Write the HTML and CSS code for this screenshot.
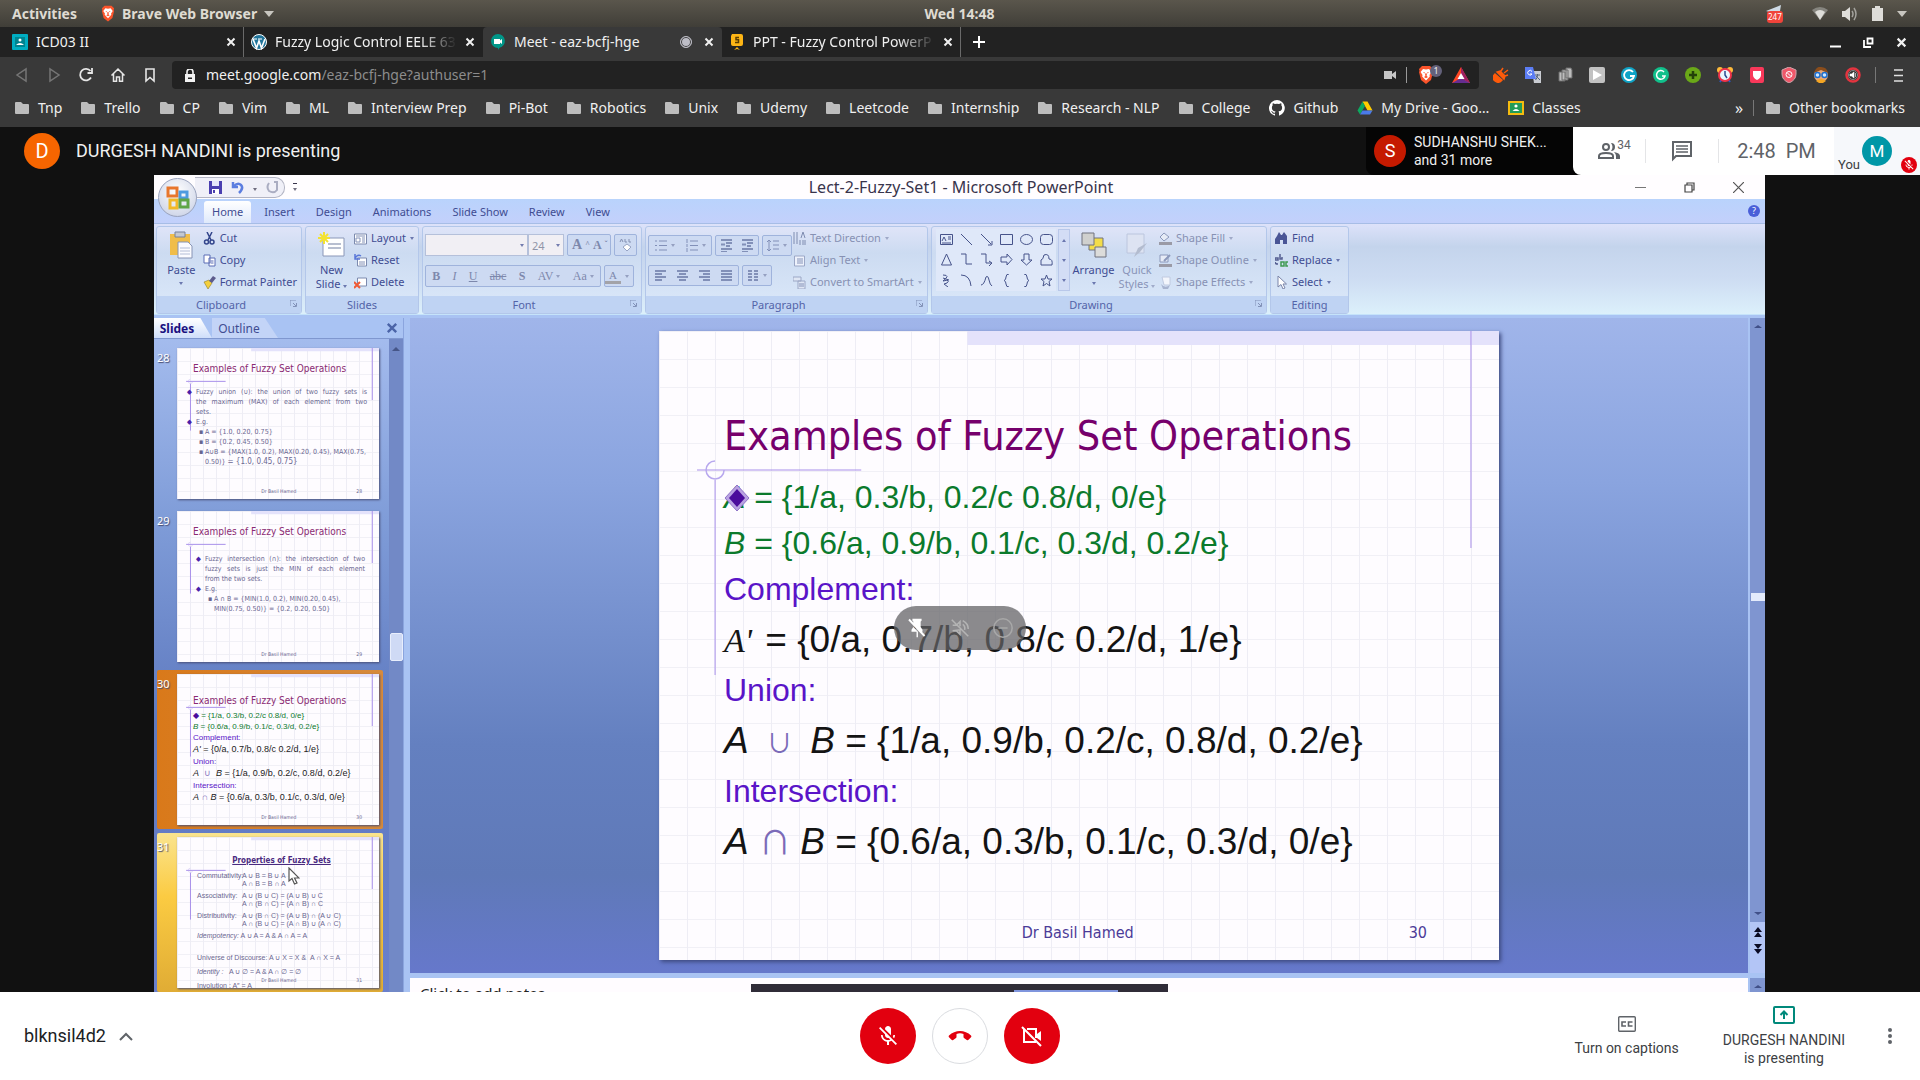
FILE: index.html
```html
<!DOCTYPE html>
<html lang="en">
<head>
<meta charset="utf-8">
<title>Meet - eaz-bcfj-hge</title>
<link rel="stylesheet" href="styles.css">
</head>
<body>
<svg class="sprite" aria-hidden="true">
  <symbol id="folder" viewBox="0 0 14 12"><path d="M1 0h5l2 2h5q1 0 1 1v8q0 1-1 1H1q-1 0-1-1V1q0-1 1-1z"/></symbol>
  <symbol id="close" viewBox="0 0 10 10"><path d="M1.5 1.5l7 7M8.500 1.500l-7 7" stroke="currentColor" stroke-width="2" fill="none"/></symbol>
  <symbol id="lion" viewBox="0 0 16 18"><path fill="#fb542b" d="M4 0h8l3 3-.5 2 .5 1-2 8-5 4-5-4L1 6l.5-1L1 3z"/><path fill="#fff" d="M5 3l3 .6L11 3l2.400 3-1.900 3 .3 1.500L8 14.500l-3.800-4 .3-1.500-1.900-3z"/><path fill="#fb542b" d="M5 6l2 .6-.7 1zM11 6l-2 .6.7 1zM7 7.500h2L8.600 10 10 11l-2 1.200L6 11l1.400-1z"/></symbol>
  <symbol id="mic-off" viewBox="0 0 24 24"><path d="M19 11h-1.700c0 .74-.16 1.430-.43 2.050l1.230 1.230c.56-.98.9-2.090.9-3.280zm-4.020.17c0-.06.02-.11.02-.17V5c0-1.660-1.340-3-3-3S9 3.340 9 5v.18l5.980 5.990zM4.270 3L3 4.270l6.010 6.010V11c0 1.660 1.330 3 2.990 3 .22 0 .44-.03.65-.08l1.660 1.660c-.71.33-1.500.52-2.310.52-2.760 0-5.300-2.100-5.300-5.100H5c0 3.410 2.720 6.230 6 6.720V21h2v-3.280c.91-.13 1.770-.45 2.540-.9L19.730 21 21 19.730 4.270 3z"/></symbol>
  <symbol id="launcher" viewBox="0 0 7 7"><path d="M0 6V0h6M3 3l3 3M6.500 3v3.500H3" fill="none" stroke="#8292b8"/></symbol>
  <symbol id="deco" viewBox="0 0 839 629" preserveAspectRatio="none"><path d="M308 0h531v14H308z" fill="#e4e2fb"/><path d="M811 0v217M38 139h164M56 149v195" stroke="#a990ea" stroke-width="1" vector-effect="non-scaling-stroke" fill="none"/><path d="M56 130a9 9 0 1 0 0 18a9 9 0 0 0 9-9" fill="none" stroke="#b8a8ee" stroke-width="1.500"/></symbol>
</svg>

<header class="desktop-bar">
  <button class="activities">Activities</button>
  <button class="app-menu"><svg width="14" height="17"><use href="#lion"/></svg>Brave Web Browser<span class="caret"></span></button>
  <time class="clock">Wed 14:48</time>
  <div class="tray">
    <span class="telegram"><svg width="16" height="12" viewBox="0 0 16 12"><path d="M0 6L15 0l-2 12-6-4z" fill="#cfdbe6"/></svg><b>247</b></span>
    <svg width="16" height="14" viewBox="0 0 16 14"><path d="M0 3Q8-3 16 3L8 13z" fill="#86857f"/><path d="M3 5Q8 1 13 5L8 13z" fill="#deddd9"/></svg>
    <svg width="16" height="14" viewBox="0 0 16 14"><path d="M0 4h3l5-4v14L3 10H0z" fill="#deddd9"/><path d="M10 4q2 3 0 6M12 1q4 6 0 12" stroke="#a3a29d" stroke-width="1.500" fill="none"/></svg>
    <svg width="11" height="15" viewBox="0 0 11 15"><path d="M3 0h5v2h3v13H0V2h3z" fill="#deddd9"/></svg>
    <span class="caret"></span>
  </div>
</header>

<nav class="tabs">
  <div class="tab"><svg width="16" height="16" viewBox="0 0 16 16"><rect width="16" height="16" rx="1" fill="#00acc1"/><path d="M3 3h10v10H3z" fill="#00838f"/><circle cx="8" cy="6" r="1.500" fill="#fff"/><path d="M4 11q4-4 8 0z" fill="#fff"/></svg><a href="#">ICD03 II</a><button aria-label="Close"><svg width="10" height="10"><use href="#close"/></svg></button></div>
  <div class="tab"><svg width="16" height="16" viewBox="0 0 16 16"><circle cx="8" cy="8" r="7.500" fill="#21759b" stroke="#fff"/><path d="M2 5l3.500 9L8 7l2.500 7L14 5" fill="none" stroke="#fff" stroke-width="1.600"/><path d="M2 5h4M7 5h4" stroke="#fff"/></svg><a href="#" class="fade">Fuzzy Logic Control EELE 63</a><button aria-label="Close"><svg width="10" height="10"><use href="#close"/></svg></button></div>
  <div class="tab active"><svg width="16" height="16" viewBox="0 0 16 16"><path d="M8 0a7 7 0 0 1 1.500 13.800L8 16v-2A7 7 0 0 1 8 0z" fill="#009688"/><path d="M4 5h6v1.500L12 5v5l-2-1.500V10H4z" fill="#fff"/></svg><a href="#">Meet - eaz-bcfj-hge</a><i class="rec"></i><button aria-label="Close"><svg width="10" height="10"><use href="#close"/></svg></button></div>
  <div class="tab"><svg width="16" height="16" viewBox="0 0 16 16"><path d="M3 0h9q2 0 2 2v8q0 2-2 2H4q-2 0-2-2V2zM8 13l3 3-3-1-3 1z" fill="#fdb515"/><path d="M10 3.500H7v2.300h2.500v2.700H6" fill="none" stroke="#5a3c00" stroke-width="1.500"/></svg><a href="#" class="fade">PPT - Fuzzy Control PowerP</a><button aria-label="Close"><svg width="10" height="10"><use href="#close"/></svg></button></div>
  <button class="new-tab" aria-label="New tab"><svg width="12" height="12" viewBox="0 0 12 12"><path d="M6 0v12M0 6h12" stroke="#fff" stroke-width="2"/></svg></button>
  <div class="window-buttons">
    <button aria-label="Minimize"><svg width="11" height="11" viewBox="0 0 11 11"><path d="M0 9.500h11" stroke="#fff" stroke-width="2"/></svg></button>
    <button aria-label="Restore"><svg width="11" height="11" viewBox="0 0 11 11"><path d="M4.500 1.500h5v5h-5zM1 3v7h7" stroke="#fff" stroke-width="1.800" fill="none"/></svg></button>
    <button aria-label="Close window"><svg width="11" height="11"><use href="#close"/></svg></button>
  </div>
</nav>

<div class="toolbar">
  <div class="nav-buttons">
    <button aria-label="Back"><svg width="16" height="16" viewBox="0 0 16 16"><path d="M12 2v12L3 8z" stroke="#757575" stroke-width="1.500" fill="none"/></svg></button>
    <button aria-label="Forward"><svg width="16" height="16" viewBox="0 0 16 16"><path d="M4 2v12l9-6z" stroke="#757575" stroke-width="1.500" fill="none"/></svg></button>
    <button aria-label="Reload"><svg width="16" height="16" viewBox="0 0 16 16"><path d="M13 10.500A5.800 5.800 0 1 1 12.500 4M14 1v5H9.500" stroke="#e6e6e6" stroke-width="1.800" fill="none"/></svg></button>
    <button aria-label="Home"><svg width="16" height="16" viewBox="0 0 16 16"><path d="M1.500 8.500L8 2l6.500 6.500M3.500 7v7.300h3V10h3v4.300h3V7" stroke="#e6e6e6" stroke-width="1.500" fill="none"/></svg></button>
    <button aria-label="Bookmark"><svg width="16" height="16" viewBox="0 0 16 16"><path d="M4 2h8v12l-4-3.500L4 14z" stroke="#e6e6e6" stroke-width="1.600" fill="none"/></svg></button>
  </div>
  <div class="address">
    <svg width="10" height="13" viewBox="0 0 10 13"><path d="M0 5h10v8H0z" fill="#f2f2f2"/><path d="M2 5V3a3 3 0 0 1 6 0v2" stroke="#f2f2f2" stroke-width="1.600" fill="none"/><path d="M3 8.500h4v1.500H3z" fill="#222"/></svg>
    <a href="#">meet.google.com<span>/eaz-bcfj-hge?authuser=1</span></a>
    <svg width="12" height="10" viewBox="0 0 12 10"><path d="M0 1h8v3l4-3v8L8 6v3H0z" fill="#c5c5c5"/></svg>
    <i class="rule"></i>
    <span class="shield"><svg width="16" height="18"><use href="#lion"/></svg><b>1</b></span>
    <svg width="18" height="16" viewBox="0 0 18 16"><path d="M9 0l9 16H0z" fill="#ff4724"/><path d="M9 0l9 16-9-5z" fill="#9e1f63"/><path d="M0 16l9-5 9 5z" fill="#662d91"/><path d="M9 6l3.500 6h-7z" fill="#fff"/></svg>
  </div>
  <div class="extensions">
    <svg viewBox="0 0 16 16"><path d="M2 7l7 6q-3 4-7 1T2 7zM4 5l7 7 1-3-5-5zM8 4l2-3M11 6l4-3M12 9l3-1" fill="#ff5b0a" stroke="#ff5b0a" stroke-width="1.500"/></svg>
    <svg viewBox="0 0 16 16"><path d="M7 4h9v12H9z" fill="#c9ccd2"/><path d="M0 0h8l3 12H0z" fill="#5b7df5"/><path d="M7 4.500A2.300 2.300 0 1 0 7 7H5" stroke="#fff" fill="none"/><path d="M10 8h5M12.500 7v1q0 3-2 5M11 9l4 4" stroke="#56657f" fill="none"/></svg>
    <svg viewBox="0 0 16 16"><path d="M2 5h6v9H2zM5 3h6v10H5zM9 1h5l1 2v8H9z" fill="#bdbdbd" stroke="#6b6b6b"/></svg>
    <svg viewBox="0 0 16 16"><rect width="16" height="16" rx="2" fill="#c2c2c2"/><path d="M4 3l9 5-9 5z" fill="#fff"/></svg>
    <svg viewBox="0 0 16 16"><circle cx="8" cy="8" r="8" fill="#0fa3c6"/><path d="M12 5A5 5 0 1 0 13 9H9" stroke="#fff" stroke-width="1.800" fill="none"/></svg>
    <svg viewBox="0 0 16 16"><circle cx="8" cy="8" r="8" fill="#11c08b"/><path d="M11 5A4.300 4.300 0 1 0 12 9H9" stroke="#fff" stroke-width="1.500" fill="none"/></svg>
    <svg viewBox="0 0 16 16"><circle cx="8" cy="8" r="8" fill="#6aa818"/><path d="M8 4v8M4 8h8" stroke="#24420a" stroke-width="2.500"/></svg>
    <svg viewBox="0 0 16 16"><circle cx="3" cy="3" r="3" fill="#ffba3a"/><circle cx="13" cy="3" r="3" fill="#ffba3a"/><path d="M3 15l2-3M13 15l-2-3" stroke="#2b56c5" stroke-width="2"/><circle cx="8" cy="8" r="6" fill="#eaf6ff" stroke="#f0334a" stroke-width="2"/><path d="M8 4v4l2 3" stroke="#2b4a90" stroke-width="1.500" fill="none"/></svg>
    <svg viewBox="0 0 16 16"><rect x="1" width="14" height="16" rx="2" fill="#f9385a"/><path d="M4 4h8v4q0 3-4 5-4-2-4-5z" fill="#fff"/></svg>
    <svg viewBox="0 0 16 16"><path d="M8 0l7 3v4q0 6-7 9-7-3-7-9V3z" fill="#f0586a" stroke="#cfa5ab"/><circle cx="8" cy="7.500" r="3" fill="none" stroke="#fff"/><path d="M6 5.500l4 4" stroke="#fff"/></svg>
    <svg viewBox="0 0 16 16"><circle cx="8" cy="8" r="7" fill="#e9a878"/><path d="M1 6q2-7 7-6 6 0 7 6L8 3z" fill="#8a4d1c"/><path d="M3 14q5-4 10 0l-3 2H6z" fill="#f5a623"/><circle cx="4.500" cy="8" r="2.500" fill="#cfe7ff" stroke="#1d6fd0" stroke-width="1.500"/><circle cx="11.500" cy="8" r="2.500" fill="#cfe7ff" stroke="#1d6fd0" stroke-width="1.500"/></svg>
    <svg viewBox="0 0 16 16"><circle cx="8" cy="8" r="6.500" fill="#333" stroke="#e3343f" stroke-width="2.500"/><circle cx="8" cy="8" r="4.500" fill="none" stroke="#888"/><path d="M5 7h1.500L9 5v6L6.500 9H5zM10.500 6v4" fill="#fff" stroke="#fff" stroke-width=".6"/></svg>
  </div>
  <i class="rule"></i>
  <button class="menu" aria-label="Menu"><svg width="9" height="13" viewBox="0 0 9 13"><path d="M0 1h9M0 6.500h9M0 12h9" stroke="#e0e0e0" stroke-width="1.600"/></svg></button>
</div>

<nav class="bookmarks">
  <a href="#"><svg><use href="#folder"/></svg>Tnp</a>
  <a href="#"><svg><use href="#folder"/></svg>Trello</a>
  <a href="#"><svg><use href="#folder"/></svg>CP</a>
  <a href="#"><svg><use href="#folder"/></svg>Vim</a>
  <a href="#"><svg><use href="#folder"/></svg>ML</a>
  <a href="#"><svg><use href="#folder"/></svg>Interview Prep</a>
  <a href="#"><svg><use href="#folder"/></svg>Pi-Bot</a>
  <a href="#"><svg><use href="#folder"/></svg>Robotics</a>
  <a href="#"><svg><use href="#folder"/></svg>Unix</a>
  <a href="#"><svg><use href="#folder"/></svg>Udemy</a>
  <a href="#"><svg><use href="#folder"/></svg>Leetcode</a>
  <a href="#"><svg><use href="#folder"/></svg>Internship</a>
  <a href="#"><svg><use href="#folder"/></svg>Research - NLP</a>
  <a href="#"><svg><use href="#folder"/></svg>College</a>
  <a href="#" class="site"><svg viewBox="0 0 16 16"><path fill="#fff" d="M8 0a8 8 0 0 0-2.530 15.590c.4.070.55-.17.55-.38v-1.490C3.730 14.200 3.300 12.700 3.300 12.700c-.36-.92-.89-1.170-.89-1.170-.73-.5.050-.49.050-.49.810.06 1.230.83 1.230.83.72 1.230 1.880.87 2.340.67.070-.52.280-.88.510-1.080-1.780-.2-3.640-.89-3.640-3.950 0-.87.310-1.590.82-2.150-.08-.2-.36-1.020.08-2.120 0 0 .67-.22 2.200.82a7.600 7.600 0 0 1 4 0c1.530-1.040 2.200-.82 2.200-.82.440 1.100.16 1.920.08 2.120.51.560.82 1.270.82 2.150 0 3.070-1.870 3.750-3.650 3.950.29.25.54.73.54 1.480v2.190c0 .21.150.46.550.38A8 8 0 0 0 8 0z"/></svg>Github</a>
  <a href="#" class="site"><svg viewBox="0 0 16 16"><path d="M5.500 1.500h5l5 9h-5z" fill="#fc0"/><path d="M5.500 1.500L8 6 3 14.500.5 10.500z" fill="#0da960"/><path d="M5.500 10.500h10L13 14.500H3z" fill="#4a7bea"/></svg>My Drive - Goo…</a>
  <a href="#" class="site"><svg viewBox="0 0 16 16"><path d="M0 1h16v14H0z" fill="#f5bc10"/><path d="M2 3h12v10H2z" fill="#229c58"/><circle cx="8" cy="6" r="1.600" fill="#fff"/><path d="M4.500 11q3.500-4 7 0z" fill="#fff"/></svg>Classes</a>
  <button class="more">»</button>
  <i class="rule"></i>
  <a href="#" class="other"><svg><use href="#folder"/></svg>Other bookmarks</a>
</nav>

<main class="meet">
  <header class="meet-head">
    <span class="avatar orange">D</span>
    <h1>DURGESH NANDINI is presenting</h1>
    <div class="speaker"><span class="avatar red">S</span><p>SUDHANSHU SHEK...<br>and 31 more</p></div>
    <div class="meet-panel">
      <button class="people" aria-label="People"><svg width="24" height="24" viewBox="0 0 24 24"><path fill="none" stroke="#5f6368" stroke-width="2" d="M2 19v-2q0-3 7-3t7 3v2z"/><circle cx="9" cy="8" r="3" fill="none" stroke="#5f6368" stroke-width="2"/><path fill="#5f6368" d="M14 4a4 4 0 1 1 0 8q3-4 0-8zM17 13q6 1 6 4v3h-4v-3q0-2-2-4z"/></svg><sup>34</sup></button>
      <button class="chat" aria-label="Chat"><svg width="24" height="24" viewBox="0 0 24 24"><path d="M3 3h18v14H6l-3 3z" fill="none" stroke="#5f6368" stroke-width="2"/><path d="M6 7h12M6 10h12M6 13h12" stroke="#5f6368" stroke-width="1.700"/></svg></button>
      <time>2:48 &nbsp;PM</time>
      <div class="self"><span>You</span><span class="avatar teal">M</span><i class="muted"><svg width="12" height="12" fill="#fff"><use href="#mic-off"/></svg></i></div>
    </div>
  </header>

  <section class="stage">
    <div class="ppt">
      <div class="ppt-title">
        <div class="quick">
          <button aria-label="Save"><svg width="13" height="13" viewBox="0 0 13 13"><path d="M0 0h13v13H0z" fill="#4b3fb0"/><path d="M3 0h7v5H3z" fill="#e6e6fa"/><path d="M3 8h7v5H3z" fill="#fff"/><path d="M4 9h2v3H4z" fill="#4b3fb0"/></svg></button>
          <button aria-label="Undo"><svg width="13" height="13" viewBox="0 0 13 13"><path d="M2 1v5h5" stroke="#5c7ee0" stroke-width="2.500" fill="none"/><path d="M3 5q4-4 7-1t-2 8" stroke="#5c7ee0" stroke-width="2.500" fill="none"/></svg></button>
          <button aria-label="Undo list"><i class="drop"></i></button>
          <button aria-label="Redo"><svg width="13" height="13" viewBox="0 0 13 13"><path d="M8 1h3v4M3 2Q0 6 3 10q5 3 8-1V4" stroke="#aaadc2" stroke-width="2" fill="none"/></svg></button>
        </div>
        <button class="quick-more" aria-label="Customize"><i class="drop"></i></button>
        <h2>Lect-2-Fuzzy-Set1 - Microsoft PowerPoint</h2>
        <div class="ppt-window">
          <button aria-label="Minimize"><svg width="11" height="11" viewBox="0 0 11 11"><path d="M0 5.500h11" stroke="#777"/></svg></button>
          <button aria-label="Restore"><svg width="11" height="11" viewBox="0 0 11 11"><path d="M1 3h7v7H1zM3 3V1h7v7H8" stroke="#444" stroke-width="1.200" fill="none"/></svg></button>
          <button aria-label="Close"><svg width="11" height="11" viewBox="0 0 11 11"><path d="M0 0l11 11M11 0L0 11" stroke="#555" stroke-width="1.200"/></svg></button>
        </div>
      </div>
      <button class="orb" aria-label="Office"><svg width="24" height="24" viewBox="0 0 24 24" fill="none" stroke-width="3"><path d="M2 2h9v8H2z" stroke="#e8762c"/><path d="M14 6h7v6h-7z" stroke="#4d9be0"/><path d="M4 14h7v8H4z" stroke="#f2b928"/><path d="M14 14h8v7h-8z" stroke="#5fa548"/></svg></button>
      <div class="ribbon-tabs">
        <button class="on">Home</button><button>Insert</button><button>Design</button><button>Animations</button><button>Slide Show</button><button>Review</button><button>View</button>
        <button class="help" aria-label="Help">?</button>
      </div>
      <div class="ribbon">
        <fieldset class="group g-clip">
          <div class="group-body">
            <button class="tall"><svg width="26" height="28" viewBox="0 0 26 28"><path d="M2 3h20v21H2z" fill="#f0bd4a"/><path d="M7 1h10v5H7z" fill="#c3c8d2" stroke="#76809a"/><path d="M10 11h10l4 4v12H10z" fill="#fbfbff" stroke="#8794b5"/><path d="M12 17h10M12 20h10M12 23h10" stroke="#b3bdd6"/></svg>Paste<i class="drop"></i></button>
            <div class="stack">
              <button><svg viewBox="0 0 13 13"><path d="M4 0l4 8M9 0L5 8" stroke="#33458c" stroke-width="1.500"/><circle cx="3.500" cy="10" r="2" fill="none" stroke="#33458c" stroke-width="1.500"/><circle cx="9" cy="10" r="2" fill="none" stroke="#33458c" stroke-width="1.500"/></svg>Cut</button>
              <button><svg viewBox="0 0 13 13"><path d="M1 1h6v8H1zM6 4h6v8H6z" fill="#fff" stroke="#5a6db5"/><path d="M7.500 7h3M7.500 9h3" stroke="#5a6db5"/></svg>Copy</button>
              <button><svg viewBox="0 0 13 13"><path d="M1 6l5-2 3 3-4 6z" fill="#f4cf3c" stroke="#8d7a2a" stroke-width=".6"/><path d="M6 5l4-5 3 2-4 5z" fill="#5c5b8c"/></svg>Format Painter</button>
            </div>
          </div>
          <legend class="with-launch">Clipboard</legend><svg class="launch"><use href="#launcher"/></svg>
        </fieldset>
        <fieldset class="group g-slides">
          <div class="group-body">
            <button class="tall"><svg width="28" height="28" viewBox="0 0 28 28"><path d="M5 7h21v18H5z" fill="#fff" stroke="#8a97b8"/><path d="M10 13h13M10 17h13" stroke="#b8bfd0" stroke-width="2"/><path d="M6 1v12M0 7h12M2 3l8 8M10 3l-8 8" stroke="#f3e230" stroke-width="2"/></svg>New<span>Slide <i class="drop"></i></span></button>
            <div class="stack">
              <button><svg viewBox="0 0 13 13"><path d="M.5 2h12v10H.5z" fill="#fff" stroke="#7c8aae"/><path d="M2 4h9M2 6h4v4H2zM8 6h3M8 8h3M8 10h3" stroke="#8492b8" fill="none"/></svg>Layout<i class="drop"></i></button>
              <button><svg viewBox="0 0 13 13"><path d="M3.500 4h9v8h-9z" fill="#fff" stroke="#7c8aae"/><path d="M5 8h6M5 10h6" stroke="#8492b8"/><path d="M1 0v5h5M1 4q3-4 6-2" stroke="#5876d8" stroke-width="1.500" fill="none"/></svg>Reset</button>
              <button><svg viewBox="0 0 13 13"><path d="M3.500 2h9v8h-9z" fill="#fff" stroke="#7c8aae"/><path d="M0 6l6 6M6 6l-6 6" stroke="#ef5a36" stroke-width="2"/></svg>Delete</button>
            </div>
          </div>
          <legend>Slides</legend>
        </fieldset>
        <fieldset class="group g-font">
          <div class="group-body rows">
            <div class="row">
              <span class="combo"><input class="font-name" aria-label="Font" value=""><input class="font-size" aria-label="Font size" value="24"><i class="drop d1"></i><i class="drop d2"></i></span>
              <span class="cluster"><button class="serif big">A<sup>^</sup></button><button class="serif">A<sup>ˇ</sup></button></span>
              <span class="cluster"><button aria-label="Clear formatting"><svg width="13" height="14" viewBox="0 0 13 14"><path d="M1 4l1.500-3L4 4M6 1v3h2M10 1v3h2" stroke="#8490b2" fill="none"/><path d="M4 9l4-3 4 3-4 4z" fill="#fff" stroke="#98a4c4"/></svg></button></span>
            </div>
            <div class="row">
              <span class="cluster letters"><button><b>B</b></button><button><i>I</i></button><button><u>U</u></button><button><s>abc</s></button><button><b>S</b></button><button>AV<em class="drop"></em></button><button>Aa<em class="drop"></em></button></span>
              <span class="cluster"><button class="ink">A</button><button aria-label="Font colors"><i class="drop"></i></button></span>
            </div>
          </div>
          <legend class="with-launch">Font</legend><svg class="launch"><use href="#launcher"/></svg>
        </fieldset>
        <fieldset class="group g-para">
          <div class="group-body">
            <div class="rows">
              <div class="row">
                <span class="cluster lists"><button aria-label="Bullets"><svg class="g"><path d="M0 2h2M0 6.500h2M0 11h2M4 2h8M4 6.500h8M4 11h8"/></svg><i class="drop"></i></button><button aria-label="Numbering"><svg class="g"><path d="M1 0v4M1 5v3M1 9v4M4 2h8M4 6.500h8M4 11h8"/></svg><i class="drop"></i></button></span>
                <span class="cluster"><button aria-label="Outdent"><svg class="g"><path d="M1 1h11M6 4h6M6 7h4M1 10h11M5 5.500H1M1 13h6" stroke-width="2"/></svg></button><button aria-label="Indent"><svg class="g"><path d="M1 1h11M6 4h6M6 7h4M1 10h11M1 5.500h4M1 13h6" stroke-width="2"/></svg></button></span>
                <span class="cluster"><button aria-label="Line spacing"><svg class="g"><path d="M2 1v11M0 3l2-2 2 2M0 10l2 2 2-2M6 2h6M6 6h6M6 10h6"/></svg><i class="drop"></i></button></span>
              </div>
              <div class="row">
                <span class="cluster aligns"><button aria-label="Left"><svg class="g"><path d="M1 2h11M1 5h7M1 8h11M1 11h7" stroke-width="2"/></svg></button><button aria-label="Center"><svg class="g"><path d="M1 2h11M3 5h7M1 8h11M3 11h7" stroke-width="2"/></svg></button><button aria-label="Right"><svg class="g"><path d="M1 2h11M5 5h7M1 8h11M5 11h7" stroke-width="2"/></svg></button><button aria-label="Justify"><svg class="g"><path d="M1 2h11M1 5h11M1 8h11M1 11h11" stroke-width="2"/></svg></button></span>
                <span class="cluster"><button aria-label="Columns"><svg class="g"><path d="M1 2h4M7 2h4M1 5h4M7 5h4M1 8h4M7 8h4M1 11h4M7 11h4" stroke-width="2"/></svg><i class="drop"></i></button></span>
              </div>
            </div>
            <div class="stack faint">
              <button><svg viewBox="0 0 13 13"><path d="M1 0v12M4 0v12M8 6l2-6 2 6M7 8v5M10 8v5M12 8v5" stroke="#7f8cb0" fill="none"/></svg>Text Direction<i class="drop"></i></button>
              <button><svg viewBox="0 0 13 13"><path d="M1.500 2h10v10h-10z" fill="#eef2fc" stroke="#9ba7c6"/><path d="M4 5h6M4 7h6M4 9h6" stroke="#8492b8"/></svg>Align Text<i class="drop"></i></button>
              <button><svg viewBox="0 0 13 13"><path d="M0 1h8v4H0zM5 5h7v8H5z" fill="#dfe6f4" stroke="#9ba7c6"/><path d="M6 8h5M6 10h5" stroke="#8492b8"/></svg>Convert to SmartArt<i class="drop"></i></button>
            </div>
          </div>
          <legend class="with-launch">Paragraph</legend><svg class="launch"><use href="#launcher"/></svg>
        </fieldset>
        <fieldset class="group g-draw">
          <div class="group-body">
            <div class="gallery">
              <svg class="g"><path d="M.5 1.500h12v10H.5zM2 8l2-4 2 4M8 4h3M8 6h3M2 10h9"/></svg><svg class="g"><path d="M1 1l11 11"/></svg><svg class="g"><path d="M1 1l10 10M8 12h4V8"/></svg><svg class="g"><path d="M.5 1.500h12v10H.5z"/></svg><svg class="g"><ellipse cx="6.500" cy="6.500" rx="6" ry="5"/></svg><svg class="g"><rect x=".5" y="1.500" width="12" height="10" rx="3"/></svg>
              <svg class="g"><path d="M6.500 1l5 11h-10z"/></svg><svg class="g"><path d="M1 1h5v10h6"/></svg><svg class="g"><path d="M1 1h5v9h5M9 8l3 2-3 3"/></svg><svg class="g"><path d="M1 4h6V1l5 5.500L7 12V9H1z"/></svg><svg class="g"><path d="M4 1v6H1l5.500 5L12 7H9V1z"/></svg><svg class="g"><path d="M1 12V7q2 0 3-5 5-2 5 4 4 0 3 6z"/></svg>
              <svg class="g"><path d="M3 1q8 0 0 6 8-2 4 2l-3 1 4 3M3 4l6 2"/></svg><svg class="g"><path d="M1 1q9 0 10 11"/></svg><svg class="g"><path d="M1 11q3 0 5-8 2-2 3 3 1 5 3 6"/></svg><svg class="g"><path d="M9 0Q6 0 6 3t-2 3.500Q6 7 6 10t3 3"/></svg><svg class="g"><path d="M4 0q3 0 3 3t2 3.500Q7 7 7 10t-3 3"/></svg><svg class="g"><path d="M6.500 1l1.500 4h4L9 7.500l1 4.500-3.500-2.500L3 12l1-4.500L1 5h4z"/></svg>
            </div>
            <div class="spin"><i class="drop up"></i><i class="drop"></i><i class="drop"></i></div>
            <button class="tall"><svg width="26" height="28" viewBox="0 0 26 28" stroke="#70727f"><path d="M8 7h14v12H8z" fill="#f3dd4a"/><path d="M1 2h12v12H1z" fill="#d0d0ce"/><path d="M14 16h11v10H14z" fill="#dcdcda"/></svg>Arrange<i class="drop"></i></button>
            <button class="tall dim"><svg width="22" height="28" viewBox="0 0 22 28"><path d="M1 3h17v19H1z" fill="#dde3f2" stroke="#bcc6de"/><path d="M21 12l-7 9-6 5 4-9z" fill="#b3bccf"/></svg>Quick<span>Styles <i class="drop"></i></span></button>
            <div class="stack faint">
              <button><svg viewBox="0 0 13 13"><path d="M5 1l5 4-5 4-4-4z" fill="#e6ebf6" stroke="#8b98bb"/><path d="M0 10h13v3H0z" fill="#9a9aa6"/></svg>Shape Fill<i class="drop"></i></button>
              <button><svg viewBox="0 0 13 13"><path d="M1 1h8v7H1z" fill="#e6ebf6" stroke="#8b98bb"/><path d="M5 7l6-6" stroke="#8b98bb" stroke-width="2"/><path d="M0 10h13v3H0z" fill="#9a9aa6"/></svg>Shape Outline<i class="drop"></i></button>
              <button><svg viewBox="0 0 13 13"><path d="M3 1h8v8H5z" fill="#f2f5fc" stroke="#c0cae0"/><path d="M2 8q4 5 9 1l-2 4H4z" fill="#a8b4d0"/></svg>Shape Effects<i class="drop"></i></button>
            </div>
          </div>
          <legend class="with-launch">Drawing</legend><svg class="launch"><use href="#launcher"/></svg>
        </fieldset>
        <fieldset class="group g-edit">
          <div class="group-body">
            <div class="stack">
              <button><svg viewBox="0 0 13 13"><path d="M2 4L4 0l2 3h1l2-3 3 4v8H8V8H5v4H0V7z" fill="#4a5596"/></svg>Find</button>
              <button><svg viewBox="0 0 13 13"><path d="M0 4h3v2H0zM5 0v5h2V3M0 8q0 2 3 2" stroke="#555f92" fill="none" stroke-width="1.500"/><path d="M6 8h3v4H6zM13 8h-2v4h2" stroke="#3f9a52" fill="none" stroke-width="1.500"/></svg>Replace<i class="drop"></i></button>
              <button><svg viewBox="0 0 13 13"><path d="M3 0v11l3-2.500L8 13l2-1-2-4h3.500z" fill="#fff" stroke="#7a84a8"/></svg>Select<i class="drop"></i></button>
            </div>
          </div>
          <legend>Editing</legend>
        </fieldset>
      </div>

      <div class="work">
        <aside class="panel">
          <div class="panel-tabs"><button class="on">Slides</button><button>Outline</button><button class="panel-close" aria-label="Close"><svg width="12" height="12"><use href="#close"/></svg></button></div>
          <div class="panel-body">
            <ol class="thumbs">
              <li><span class="num">28</span>
                <article class="thumb"><svg class="deco"><use href="#deco"/></svg><h4>Examples of Fuzzy Set Operations</h4>
                  <div class="t28"><p class="dot just">Fuzzy union (∪): the union of two fuzzy sets is<br>the maximum (MAX) of each element from two</p><p>sets.</p><p class="dot">E.g.</p><p class="sub">A = {1.0, 0.20, 0.75}</p><p class="sub">B = {0.2, 0.45, 0.50}</p><p class="sub">A∪B = {MAX(1.0, 0.2), MAX(0.20, 0.45), MAX(0.75,<br>0.50)} <big>= {1.0, 0.45, 0.75}</big></p></div>
                  <footer><span>Dr Basil Hamed</span><span>28</span></footer></article></li>
              <li><span class="num">29</span>
                <article class="thumb"><svg class="deco"><use href="#deco"/></svg><h4>Examples of Fuzzy Set Operations</h4>
                  <div class="t29"><p class="dot just">Fuzzy intersection (∩): the intersection of two<br>fuzzy sets is just the MIN of each element</p><p>from the two sets.</p><p class="dot">E.g.</p><p class="sub">A ∩ B = {MIN(1.0, 0.2), MIN(0.20, 0.45),<br>MIN(0.75, 0.50)} = {0.2, 0.20, 0.50}</p></div>
                  <footer><span>Dr Basil Hamed</span><span>29</span></footer></article></li>
              <li class="current"><span class="num">30</span>
                <article class="thumb"><svg class="deco"><use href="#deco"/></svg><h4>Examples of Fuzzy Set Operations</h4>
                  <div class="t30"><p class="green"><span class="gem">◆</span> = {1/a, 0.3/b, 0.2/c 0.8/d, 0/e}</p><p class="green"><i>B</i> = {0.6/a, 0.9/b, 0.1/c, 0.3/d, 0.2/e}</p><p class="violet">Complement:</p><p class="l"><i>A'</i> = {0/a, 0.7/b, 0.8/c 0.2/d, 1/e}</p><p class="violet">Union:</p><p class="l"><i>A</i> &nbsp;<u>∪</u> &nbsp;<i>B</i> = {1/a, 0.9/b, 0.2/c, 0.8/d, 0.2/e}</p><p class="violet">Intersection:</p><p class="l"><i>A</i> <u>∩</u> <i>B</i> = {0.6/a, 0.3/b, 0.1/c, 0.3/d, 0/e}</p></div>
                  <footer><span>Dr Basil Hamed</span><span>30</span></footer></article></li>
              <li class="hover"><span class="num">31</span>
                <article class="thumb"><svg class="deco"><use href="#deco"/></svg><h4 class="props-title">Properties of Fuzzy Sets</h4>
                  <dl class="t31"><dt>Commutativity:</dt><dd>A ∪ B = B ∪ A<br>A ∩ B = B ∩ A</dd><dt>Associativity:</dt><dd>A ∪ (B ∪ C) = (A ∪ B) ∪ C<br>A ∩ (B ∩ C) = (A ∩ B) ∩ C</dd><dt>Distributivity:</dt><dd>A ∪ (B ∩ C) = (A ∪ B) ∩ (A ∪ C)<br>A ∩ (B ∪ C) = (A ∩ B) ∪ (A ∩ C)</dd></dl>
                  <div class="t31b"><p><i>Idempotency:</i> A ∪ A = A &amp; A ∩ A = A</p><p class="gap">Universe of Discourse: A ∪ X = X &amp; &nbsp;A ∩ X = A</p><p><i>Identity :</i> &nbsp; A ∪ ∅ = A &amp; A ∩ ∅ = ∅</p><p>Involution : A″ = A</p></div>
                  <footer><span>Dr Basil Hamed</span><span>31</span></footer></article></li>
            </ol>
            <div class="scroll"><i class="drop up"></i><i class="grip"></i></div>
          </div>
          <svg class="pointer" width="12" height="18" viewBox="0 0 12 18"><path d="M1 1v13l3-2.500L6.500 17l2.500-1-2.500-5H11z" fill="#fff" stroke="#555" stroke-width="1.200"/></svg>
        </aside>

        <div class="editor">
          <div class="canvas-row">
            <div class="canvas">
              <article class="slide">
                <svg class="deco"><use href="#deco"/></svg>
                <h3>Examples of Fuzzy Set Operations</h3>
                <p class="green"><i class="a1">A<svg width="26" height="28" viewBox="0 0 26 28"><path d="M13 1l12 13-12 13L1 14z" fill="#b9a2e2" stroke="#8f74c8"/><path d="M13 5l8 9-8 9-8-9z" fill="#4a0c9c"/></svg></i> = {1/a, 0.3/b, 0.2/c 0.8/d, 0/e}</p>
                <p class="green"><i>B</i> = {0.6/a, 0.9/b, 0.1/c, 0.3/d, 0.2/e}</p>
                <p class="violet">Complement:</p>
                <p class="large"><i class="prime">A'</i> = {0/a, 0.7/b, 0.8/c 0.2/d, 1/e}</p>
                <p class="violet">Union:</p>
                <p class="large"><i>A</i> <u class="cup">∪</u> <i>B</i> = {1/a, 0.9/b, 0.2/c, 0.8/d, 0.2/e}</p>
                <p class="violet">Intersection:</p>
                <p class="large"><i>A</i> <u class="cap">∩</u> <i>B</i> = {0.6/a, 0.3/b, 0.1/c, 0.3/d, 0/e}</p>
                <footer><span>Dr Basil Hamed</span><span>30</span></footer>
              </article>
            </div>
            <div class="vscroll"><i class="drop up"></i><i class="grip"></i><i class="drop"></i>
              <div class="jump"><i class="drop up"></i><i class="drop up"></i><i class="drop"></i><i class="drop"></i></div></div>
          </div>
          <div class="notes"><p>Click to add notes</p><div class="vscroll"><i class="drop up"></i></div><div class="toast"><i></i></div></div>
        </div>
      </div>
    </div>

    <div class="tile-actions">
      <button aria-label="Unpin"><svg width="22" height="22" viewBox="0 0 24 24" fill="#fff"><path d="M7 2h10v2l-1 1v6l2 3v2h-2L8 8V5L7 4zM8 11l5 5v6h-1.500v-6H6v-2zM2.500 3.500L4 2l17 18-1.500 1.500z"/></svg></button>
      <button aria-label="Mute" disabled><svg width="22" height="22" viewBox="0 0 24 24" fill="none" stroke="#b4b4b4" stroke-width="1.700"><path d="M4 9h4l4-4v5M12 14v5l-4-4H4zM3 3l18 18M15 8q3 2 2 6M15 4q6 3 6 9"/></svg></button>
      <button aria-label="Remove" disabled><svg width="22" height="22" viewBox="0 0 24 24" fill="none" stroke="#a8a8a8" stroke-width="1.700"><circle cx="12" cy="12" r="10"/><path d="M7 12h10"/></svg></button>
    </div>
  </section>

  <footer class="controls">
    <button class="details">blknsil4d2<svg width="14" height="9" viewBox="0 0 14 9"><path d="M1 8l6-6 6 6" fill="none" stroke="#5f6368" stroke-width="2"/></svg></button>
    <div class="call">
      <button class="off" aria-label="Microphone"><svg width="24" height="24" fill="#fff"><use href="#mic-off"/></svg></button>
      <button class="end" aria-label="Leave call"><svg width="24" height="24" viewBox="0 0 24 24"><path fill="#e2000f" d="M12 7c4 0 8 1.600 11 4.600.5.500.5 1.200 0 1.700l-2.500 2.500c-.5.500-1.200.5-1.700.1l-2.800-2c-.3-.3-.5-.6-.5-1V10q-3.500-1.300-7 0v2.900c0 .4-.2.800-.5 1l-2.800 2c-.5.400-1.200.4-1.700-.1L1 13.300c-.5-.5-.5-1.200 0-1.700C4 8.600 8 7 12 7z"/></svg></button>
      <button class="off" aria-label="Camera"><svg width="24" height="24" viewBox="0 0 24 24" fill="none" stroke="#fff" stroke-width="2"><path d="M7 5h9v9M16 18H4V5M2 3l19 19"/><path d="M17 10l4-3v10l-4-3z" fill="#fff" stroke="none"/></svg></button>
    </div>
    <div class="actions">
      <button class="captions"><svg width="18" height="16" viewBox="0 0 18 16"><rect x=".7" y=".7" width="16.600" height="14.600" rx="1" fill="none" stroke="#5f6368" stroke-width="1.400"/><path d="M8 6H4v4h4M14.500 6h-4v4h4" fill="none" stroke="#5f6368" stroke-width="1.600"/></svg>Turn on captions</button>
      <button class="present"><svg width="22" height="18" viewBox="0 0 22 18"><rect x="1" y="1" width="20" height="16" rx="1" fill="none" stroke="#00897b" stroke-width="2"/><path d="M11 13V6M7.500 9L11 5.500 14.500 9" fill="none" stroke="#00897b" stroke-width="2"/></svg>DURGESH NANDINI<br>is presenting</button>
      <button class="dots" aria-label="More options"><svg width="4" height="16" viewBox="0 0 4 16" fill="#5f6368"><circle cx="2" cy="2" r="2"/><circle cx="2" cy="8" r="2"/><circle cx="2" cy="14" r="2"/></svg></button>
    </div>
  </footer>
</main>
</body>
</html>
```

FILE: styles.css
```css
* { box-sizing: border-box; margin: 0; padding: 0; }
body {
  display: flex;
  flex-direction: column;
  height: 100vh;
  overflow: hidden;
  font: 15px/20px "Noto Sans", "Open Sans", sans-serif;
  color: #f0f0f0;
  background: #393939;
}
button { font: inherit; color: inherit; background: none; border: 0; white-space: nowrap; }
button svg, a svg { flex: none; }
a { color: inherit; text-decoration: none; }
svg { display: block; }
.sprite { position: absolute; width: 0; height: 0; }
.rule { width: 1px; height: 16px; background: #777; }

/* desktop bar */
.desktop-bar {
  display: grid;
  grid-template-columns: 89px 1fr auto 1fr 89px;
  align-items: center;
  flex: none;
  height: 27px;
  padding: 0 13px 0 12px;
  background: linear-gradient(#5a564c, #403e38);
  color: #dfdbd2;
  font-size: 14px;
  font-weight: 700;
}
.activities { text-align: left; }
.app-menu { display: flex; align-items: center; gap: 7px; }
.caret { border: 5px solid transparent; border-top: 6px solid #c8c6c0; border-bottom: 0; }
.tray { display: flex; align-items: center; justify-content: flex-end; gap: 14px; grid-column: 4 / 6; }
.telegram { position: relative; width: 18px; height: 18px; margin-right: 14px; }
.telegram b { position: absolute; left: 1px; top: 6px; padding: 0 1px; border-radius: 3px; background: #f0433a; color: #fff; font-size: 8px; line-height: 12px; font-weight: 400; }

/* browser tabs */
.tabs { display: flex; flex: none; height: 30px; background: #222; }
.tab { display: flex; align-items: center; gap: 8px; flex: 0 0 239px; min-width: 0; padding: 0 7px 0 7px; border-right: 1px solid transparent; }
.tab:first-child { flex-basis: 244px; padding-left: 12px; border-right-color: #6a6a6a; }
.tab:nth-child(4) { border-right-color: #6a6a6a; }
.tab a { flex: 1; overflow: hidden; white-space: nowrap; font-size: 14px; }
.tab button { width: 10px; flex: none; }
.tab.active { background: #393939; border-radius: 4px 4px 0 0; }
.fade { -webkit-mask-image: linear-gradient(90deg, #000 80%, transparent); mask-image: linear-gradient(90deg, #000 80%, transparent); }
.rec { width: 12px; height: 12px; margin-right: 4px; border: 1px solid #bdbdc6; border-radius: 50%; background: #bdbdc6; box-shadow: inset 0 0 0 1px #393939; }
.new-tab { padding: 0 12px; }
.window-buttons { display: flex; gap: 22px; margin-left: auto; padding-right: 13px; }

/* toolbar */
.toolbar { display: flex; align-items: center; flex: none; height: 36px; padding-right: 17px; }
.nav-buttons { display: flex; gap: 16px; padding: 0 14px; }
.address { display: flex; align-items: center; flex: 1; height: 28px; padding: 0 9px 0 13px; background: #222; border-radius: 4px; }
.address a { flex: 1; margin-left: 11px; font-size: 14px; }
.address a span { color: #8c8c8c; }
.address .rule { margin: 0 11px 0 10px; background: #999; }
.shield { position: relative; margin-right: 18px; }
.shield b { position: absolute; left: 12px; top: -1px; width: 12px; height: 12px; border-radius: 6px; background: #63617a; font-size: 9px; line-height: 12px; text-align: center; font-weight: 400; }
.extensions { display: flex; gap: 16px; padding: 0 14px; }
.extensions svg { width: 16px; height: 16px; }
.menu { margin-left: 18px; }

/* bookmarks */
.bookmarks { display: flex; align-items: center; flex: none; gap: 19px; height: 34px; padding: 0 15px 4px; font-size: 14px; white-space: nowrap; }
.bookmarks a { display: flex; align-items: center; gap: 9px; }
.bookmarks svg { width: 14px; height: 12px; fill: #bdbdbd; }
.bookmarks .site { gap: 8px; }
.bookmarks .site svg { width: 16px; height: 16px; }
.more { margin-left: auto; font-size: 16px; }
.bookmarks .rule { margin: 0 -7px 0 -9px; }

/* meet */
.meet { display: flex; flex-direction: column; flex: 1; min-height: 0; background: #111; font-family: Roboto, "Liberation Sans", sans-serif; }
.meet-head { display: flex; align-items: center; flex: none; height: 48px; padding-left: 24px; }
.avatar { display: grid; place-items: center; flex: none; border-radius: 50%; color: #fff; }
.orange { width: 36px; height: 36px; background: #f66500; font-size: 20px; }
.red { width: 32px; height: 32px; background: #c51a00; font-size: 18px; }
.teal { width: 30px; height: 30px; background: #0097a7; font-size: 17px; }
h1 { flex: 1; margin-left: 16px; font-size: 18px; font-weight: 400; }
.speaker { display: flex; align-items: center; gap: 8px; width: 215px; height: 48px; margin-right: -8px; padding-left: 8px; background: #050505; border-radius: 0 0 0 8px; font-size: 14px; line-height: 18px; }
.meet-panel { position: relative; display: flex; align-items: center; height: 48px; overflow: hidden; background: #fff; color: #5f6368; border-radius: 0 0 0 8px; }
.meet-panel > button { display: flex; justify-content: center; width: 73px; height: 24px; border-right: 1px solid #e4e5e7; }
.people { padding-left: 10px; }
.people sup { margin-left: -4px; font-size: 12px; line-height: 12px; }
.meet-panel time { width: 115px; text-align: center; font-size: 20px; }
.self { position: relative; display: flex; align-items: center; gap: 2px; width: 86px; height: 48px; padding-left: 4px; background: #f6f8fb; }
.self > span:first-child { align-self: flex-end; color: #3c4043; font-size: 13px; }
.muted { position: absolute; right: 3px; bottom: 2px; display: grid; place-items: center; width: 16px; height: 16px; border-radius: 50%; background: #e2000f; }

.stage { position: relative; flex: 1; min-height: 0; padding: 0 155px 0 154px; overflow: hidden; }
.tile-actions { position: absolute; left: calc(50% - 66px); top: 431px; display: flex; align-items: center; justify-content: space-around; width: 132px; height: 44px; padding: 0 2px; border-radius: 22px; background: rgba(98, 99, 101, .74); }

/* shared presentation window */
.ppt { position: relative; display: flex; flex-direction: column; height: 100%; background: #fffdff; color: #3f4c92; font: 11px/16px "Noto Sans", "Open Sans", sans-serif; }
.drop { display: inline-block; flex: none; border: 2px solid transparent; border-top: 3px solid currentColor; border-bottom: 0; opacity: .7; }
.drop.up { border-bottom: 3px solid currentColor; border-top: 0; }
.ppt-title { display: flex; align-items: center; flex: none; height: 24px; color: #38344c; }
.quick { display: flex; align-items: center; gap: 9px; height: 21px; width: 90px; margin-left: 41px; padding-left: 14px; border: 1px solid #b3b5c4; border-left: 0; border-radius: 0 10px 10px 0; background: #f0f0f8; }
.quick-more { margin-left: 8px; border-top: 1px solid #38344c; line-height: 6px; }
h2 { flex: 1; padding-right: 10px; text-align: center; font-size: 16px; font-weight: 400; }
.ppt-window { display: flex; gap: 38px; padding-right: 21px; }
.orb { position: absolute; left: 4px; top: 3px; display: grid; place-items: center; width: 39px; height: 39px; border-radius: 50%; border: 1px solid #9aa3bd; background: radial-gradient(circle at 50% 35%, #fff, #d3d9ea 75%, #aab6d6); }
.ribbon-tabs { display: flex; align-items: flex-end; flex: none; height: 24px; padding-left: 50px; background: linear-gradient(#b9d3fc, #c3d0fb); }
.ribbon-tabs button { height: 22px; padding: 0 8px; margin-right: 5px; }
.ribbon-tabs .on { background: linear-gradient(#fff, #dfe9fb); border-radius: 3px 3px 0 0; }
.ribbon-tabs .help { align-self: center; width: 12px; height: 12px; padding: 0; margin: 0 5px 0 auto; border-radius: 50%; background: #4a5fd8; color: #fff; font-size: 9px; line-height: 12px; }
.ribbon { display: flex; gap: 3px; flex: none; height: 92px; padding: 2px 2px 0; background: linear-gradient(#dde2fa, #c4d4ec 25%, #cddcf2 60%, #dcf0fb); border-top: 1px solid #a7bde6; border-bottom: 1px solid #c5e3fa; }
.group { position: relative; display: flex; flex-direction: column; min-width: 0; border: 1px solid #b3c7ea; border-radius: 3px; background: linear-gradient(#dfe4f8, #ccdbf1 30%, #dce9fa); }
.g-clip { flex: 0 0 146px; }
.g-slides { flex: 0 0 114px; }
.g-font { flex: 0 0 220px; }
.g-para { flex: 0 0 283px; }
.g-draw { flex: 0 0 336px; }
.g-edit { flex: 0 0 79px; }
.group-body { display: flex; flex: 1; min-height: 0; gap: 1px; padding: 1px 4px 4px; }
.group legend { order: 2; float: left; width: 100%; height: 17px; text-align: center; line-height: 18px; background: #bfd3f3; color: #5363a8; }
.group .with-launch { padding-right: 16px; }
.launch { position: absolute; right: 4px; bottom: 6px; width: 7px; height: 7px; }
.tall { display: flex; flex-direction: column; align-items: center; width: 43px; line-height: 14px; padding-top: 3px; }
.tall svg { margin-bottom: 4px; }
.tall > .drop { margin-top: 5px; }
.dim { color: #8a94b8; width: 40px; }
.stack { display: flex; flex-direction: column; justify-content: space-between; }
.stack button { display: flex; align-items: center; gap: 4px; line-height: 20px; }
.stack svg { width: 13px; height: 13px; }
.faint { color: #8791b3; }
.rows { display: flex; flex-direction: column; gap: 9px; padding: 7px 2px 0; }
.row { display: flex; gap: 3px; height: 22px; }
.cluster { display: flex; align-items: center; justify-content: space-around; border: 1px solid #9fb3dc; border-radius: 2px; color: #7d88ac; background: #cddaf2; }
.cluster button { display: flex; align-items: center; gap: 3px; padding: 0 4px; }
.serif, .letters { font-family: "Liberation Serif", serif; font-size: 12px; }
.serif { width: 21px; font-weight: 700; }
.serif sup { font-size: 8px; }
.big { font-size: 14px; }
.letters { width: 176px; }
.letters button { padding: 0 2px; }
.ink { font-family: "Liberation Serif", serif; line-height: 12px; border-bottom: 3px solid #a3a3a8; }
.combo { position: relative; display: flex; }
.combo input { height: 22px; border: 1px solid #b5c0da; background: #f1eff4; color: #9095a8; font: inherit; padding-left: 3px; }
.font-name { width: 103px; }
.font-size { width: 36px; }
.d1, .d2 { position: absolute; top: 10px; right: 40px; }
.d2 { right: 4px; }
.g { width: 13px; height: 13px; fill: none; stroke: #8290b8; }
.lists { width: 64px; }
.aligns { width: 91px; }
.g-para .rows { padding-right: 0; padding-left: 0; }
.g-para .group-body { padding-left: 2px; padding-right: 2px; }
.g-para .row { height: 21px; }
.g-para .cluster button { padding: 0 4px; }
.gallery { display: grid; grid-template-columns: repeat(6, 20px); place-items: center; height: 62px; margin-top: 1px; background: #dfe8f9; }
.gallery .g { stroke: #46538a; }
.spin { display: flex; flex-direction: column; align-items: center; justify-content: space-around; width: 12px; height: 62px; margin-top: 1px; background: #d3ddf5; border: 1px solid #b9c8ea; }
.g-draw .group-body { gap: 2px; }

/* slide panel */
.work { display: flex; flex: 1; min-height: 0; padding-top: 3px; background: #a9c3f3; }
.panel { position: relative; display: flex; flex-direction: column; width: 250px; border-right: 1px solid #8ba5de; background: linear-gradient(#a8bff0, #7f9cd8 30%, #5f7ac0 60%, #6a80cc); }
.panel-tabs { display: flex; flex: none; height: 21px; background: #a9c3f3; border-bottom: 1px solid #7f97cf; font-size: 12px; line-height: 21px; }
.panel-tabs button { width: 66px; padding-right: 12px; background: #c3d4f7; clip-path: polygon(0 0, 80% 0, 100% 100%, 0 100%); }
.panel-tabs .on { width: 58px; background: linear-gradient(#fff, #cfdefa); color: #1a1080; font-weight: 700; }
.panel-tabs .panel-close { display: grid; place-items: center; width: 22px; padding: 0; margin-left: auto; background: none; clip-path: none; color: #4b64a8; }
.panel-body { display: flex; flex: 1; min-height: 0; overflow: hidden; }
.thumbs { display: flex; flex-direction: column; gap: 4px; flex: 1; padding: 5px 6px 0 3px; list-style: none; }
.thumbs li { display: flex; flex: none; justify-content: space-between; height: 159px; padding: 4px 4px 4px 0; border-radius: 2px; }
.thumbs .current { background: linear-gradient(90deg, #d9791a, #d68a3d); }
.thumbs .hover { background: linear-gradient(#fae48e, #fbcb42 40%, #e0ac35); }
.num { padding-top: 2px; color: #fff; font-size: 11px; text-shadow: 1px 1px 1px #444a70; }
.thumb, .slide { position: relative; background-color: #fefcff; background-image: linear-gradient(90deg, #eeedf5 1px, transparent 1px), linear-gradient(#f1f0f6 1px, transparent 1px); }
.thumb { display: flex; flex-direction: column; width: 202px; background-size: 13px 13px; box-shadow: 1px 1px 2px #4a4f78; color: #6a6690; font: 8px/9px "DejaVu Sans Condensed", "DejaVu Sans", sans-serif; white-space: nowrap; }
.deco { position: absolute; inset: 0; width: 100%; height: 100%; }
.thumb > :not(.deco), .slide > :not(.deco) { position: relative; }
h4 { padding: 15px 0 0 16px; font-size: 10px; line-height: 12px; font-weight: 400; color: #8a2a72; }
.thumb footer { display: flex; justify-content: flex-end; gap: 60px; margin-top: auto; padding: 0 17px 3px 0; font-size: 5px; }
.t28 { padding: 12px 12px 0 19px; line-height: 10px; font-size: 7px; }
.t28 big { font-size: 8px; }
.t29 { padding: 16px 14px 0 28px; line-height: 10px; font-size: 7px; }
.just { text-align: justify; text-align-last: justify; }
.dot::before { content: "◆"; position: absolute; margin-left: -9px; font-size: 7px; color: #4a20a8; }
.sub { padding-left: 9px; }
.sub::before { content: "▪"; position: absolute; margin-left: -6px; }
.t30 { padding: 3px 0 0 16px; font: 8px/11px "Liberation Sans", sans-serif; }
.t30 .l { font-size: 9px; line-height: 13px; color: #222; }
.current h4 { padding-top: 21px; }
.t30 u { text-decoration: none; color: #8a7ac0; }
.gem { color: #4a0c9c; }
.green { color: #0b7a2c; }
.violet { color: #5a14c8; }
h4.props-title { padding: 18px 0 0 7px; text-align: center; text-decoration: underline; font-size: 8px; font-weight: 700; color: #4a2a80; }
.t31 { display: grid; grid-template-columns: 45px 1fr; row-gap: 4px; padding: 5px 0 0 20px; font: 7px/8px "Liberation Sans", sans-serif; }
.t31b { padding: 1px 0 0 20px; font: 7px/14px "Liberation Sans", sans-serif; }
.t31b .gap { padding-top: 8px; }
.thumb > footer:last-child { position: absolute; right: 0; bottom: 0; }
.scroll { display: flex; flex-direction: column; align-items: center; width: 14px; background: #7289c6; color: #33406e; }
.scroll .drop { margin-top: 8px; border-width: 0 4px 4px; }
.scroll .grip { width: 13px; height: 28px; margin-top: 282px; border-radius: 2px; background: #cfdaf5; border: 1px solid #e8eefc; }
.pointer { position: absolute; left: 134px; top: 549px; }

/* slide editor */
.editor { display: flex; flex-direction: column; flex: 1; min-width: 0; margin-left: 6px; }
.canvas-row { display: flex; flex: 1; min-height: 0; }
.canvas { display: flex; flex: 1; padding: 13px 249px; background: linear-gradient(#a0b5ea, #8aa4df 25%, #6480c0 65%, #5f79b8 85%, #6678cb); }
.slide { flex: 1; min-width: 0; padding: 75px 0 0 65px; background-size: 28px 28px; box-shadow: 2px 2px 4px #3d4a80; font: 32px/46px "Liberation Sans", Arial, sans-serif; white-space: nowrap; }
h3 { margin-bottom: 8px; font: 41px/60px "DejaVu Sans Condensed", "DejaVu Sans", sans-serif; color: #76006c; }
.slide .large { font-size: 37px; line-height: 55px; color: #141414; }
.a1 { position: relative; }
.a1 svg { position: absolute; left: 0; top: 5px; }
.prime { margin-right: 3px; font: italic 34px/40px "Liberation Serif", serif; }
.cup, .cap { display: inline-block; text-align: center; text-decoration: none; color: #7b6ab8; font: 32px/30px "Noto Sans CJK JP", "DejaVu Sans", sans-serif; }
.cup { width: 41px; font-size: 26px; }
.cap { width: 31px; }
.slide footer { display: flex; justify-content: flex-end; gap: 275px; padding: 52px 72px 0 0; font: 16px/24px "DejaVu Sans Condensed", "DejaVu Sans", sans-serif; color: #4b3b98; }
.vscroll { display: flex; flex-direction: column; align-items: center; flex: none; width: 17px; background: #7f95d0; border-left: 2px solid #a9c3f3; color: #26336a; }
.vscroll .drop { margin-top: 7px; border-left-width: 4px; border-right-width: 4px; }
.vscroll .grip { width: 14px; height: 8px; margin: 265px 0 auto; background: #e4ebfb; }
.vscroll > .drop:nth-child(3) { margin: 0 0 7px; }
.jump { display: flex; flex-direction: column; align-items: center; width: 100%; height: 51px; padding-top: 5px; background: #b3c5f6; color: #0a0a24; }
.jump .drop { margin: 0; opacity: 1; border-width: 0 4px 5px; }
.jump .drop:nth-child(n+3) { border-width: 5px 4px 0; }
.jump .drop:nth-child(3) { margin-top: 7px; }
.notes { position: relative; display: flex; flex: none; height: 19px; overflow: hidden; border-top: 5px solid #a9c3f3; background: #fffcff; color: #222; }
.notes p { flex: 1; padding: 5px 0 0 10px; font-size: 15px; line-height: 20px; }
.toast { position: absolute; left: 341px; top: 6px; display: flex; justify-content: flex-end; width: 417px; height: 40px; padding: 6px 50px; background: #302c38; }
.toast i { width: 104px; background: #7f95dd; }

/* meet controls */
.controls { display: grid; grid-template-columns: 1fr auto 1fr; align-items: center; flex: none; height: 88px; padding: 0 24px; background: #fff; color: #3c4043; }
.details { display: flex; align-items: center; gap: 13px; font-size: 18px; color: #202124; }
.call { display: flex; gap: 16px; }
.call button { display: grid; place-items: center; width: 56px; height: 56px; border-radius: 50%; }
.off { background: #e2000f; }
.call .end { border: 1px solid #dadce0; }
.actions { display: flex; align-items: center; justify-content: flex-end; padding-right: 4px; font-size: 14px; line-height: 18px; }
.captions svg, .present svg { margin: 0 auto 7px; }
.present { margin: 0 43px 0 44px; }
```
